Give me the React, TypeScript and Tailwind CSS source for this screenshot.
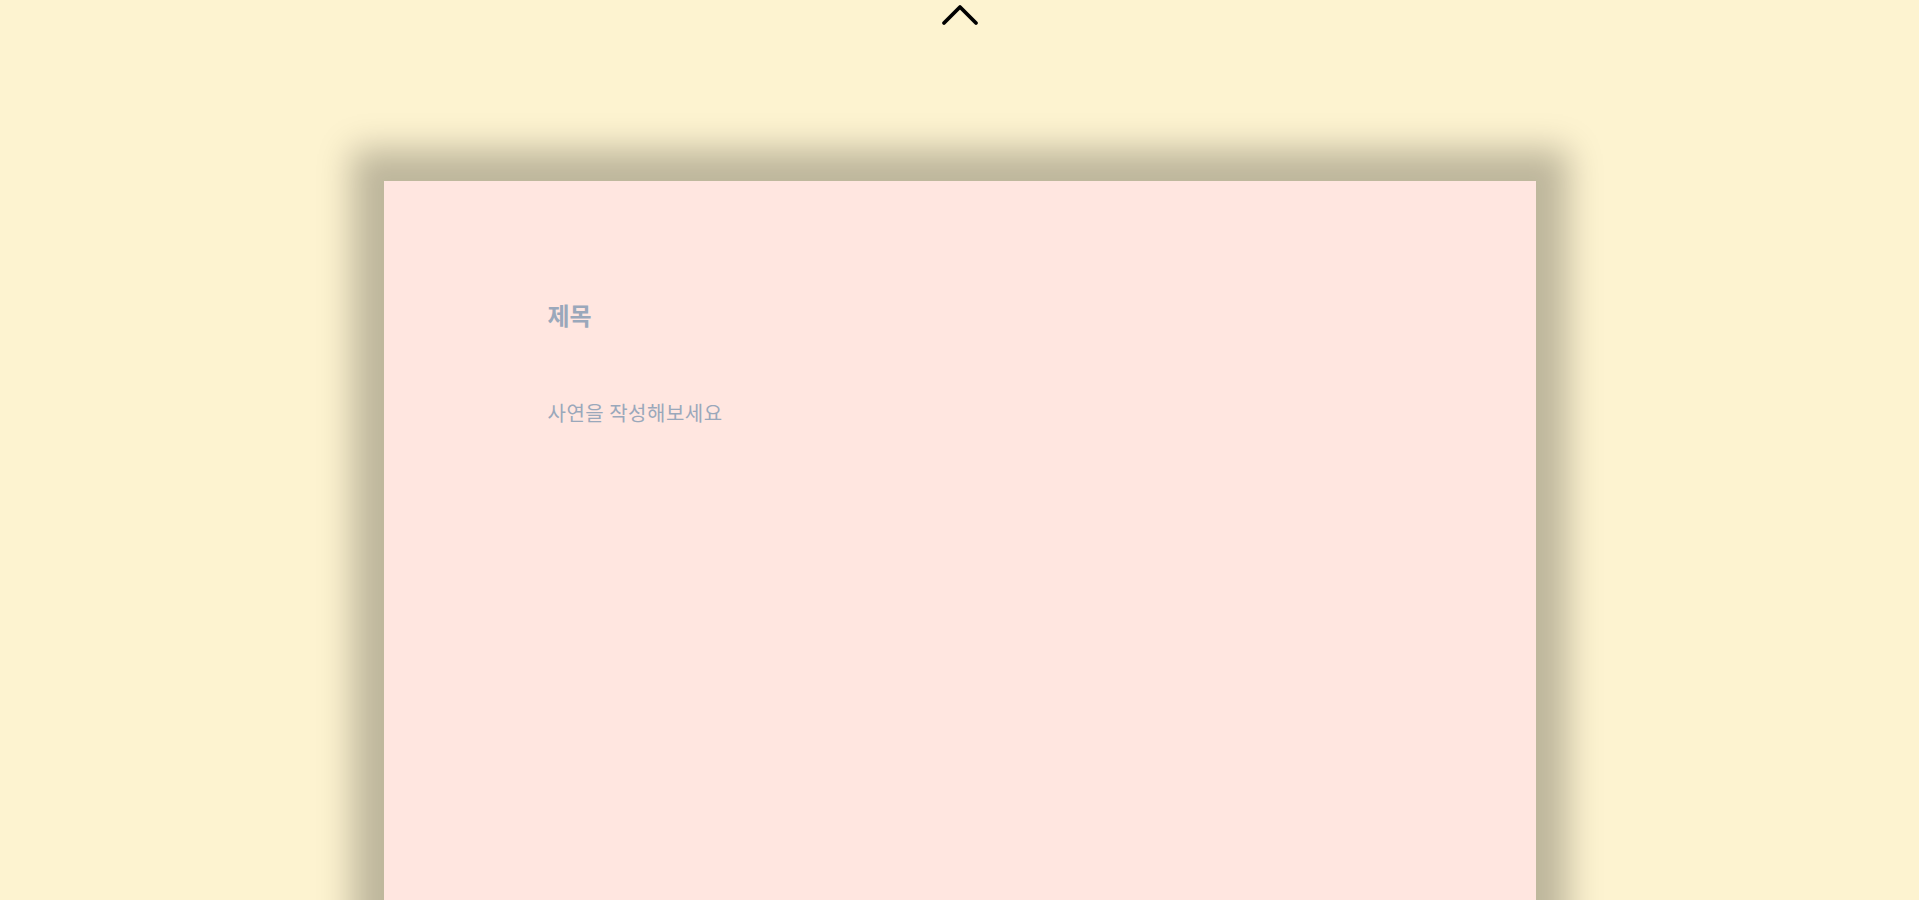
import React from "react";

const ChevronUp = () => (
  <svg width="40" height="24" viewBox="0 0 40 24" fill="none">
    <path d="M4 21 L20 5 L36 21" stroke="#000" strokeWidth="3.8" strokeLinecap="round" strokeLinejoin="round" />
  </svg>
);

const App = () => {
  return (
    <div className="min-h-screen bg-[#fdf3d0] flex flex-col items-center overflow-hidden" style={{ fontFamily: '"Noto Sans CJK KR", "Noto Sans", sans-serif' }}>
      {/* scroll-up button */}
      <button className="h-[28px] flex items-center justify-center">
        <ChevronUp />
      </button>

      {/* letter card */}
      <div className="mt-[153px] w-[1152px] h-[900px] bg-[#ffe6e0] shadow-[0_0_32px_32px_rgba(0,0,0,0.25)] pl-[164px] pr-[164px] pt-[117px] flex flex-col">
        <input
          type="text"
          placeholder="제목"
          className="bg-transparent outline-none text-[24px] font-bold leading-[34px] text-slate-500 placeholder:text-[#9aa8bb]"
        />
        <textarea
          placeholder="사연을 작성해보세요"
          className="mt-[67px] bg-transparent outline-none resize-none h-[500px] text-[20px] leading-[28px] text-slate-500 placeholder:text-[#9aa8bb] tracking-[0.5px]"
        />
      </div>
    </div>
  );
};

export default App;
